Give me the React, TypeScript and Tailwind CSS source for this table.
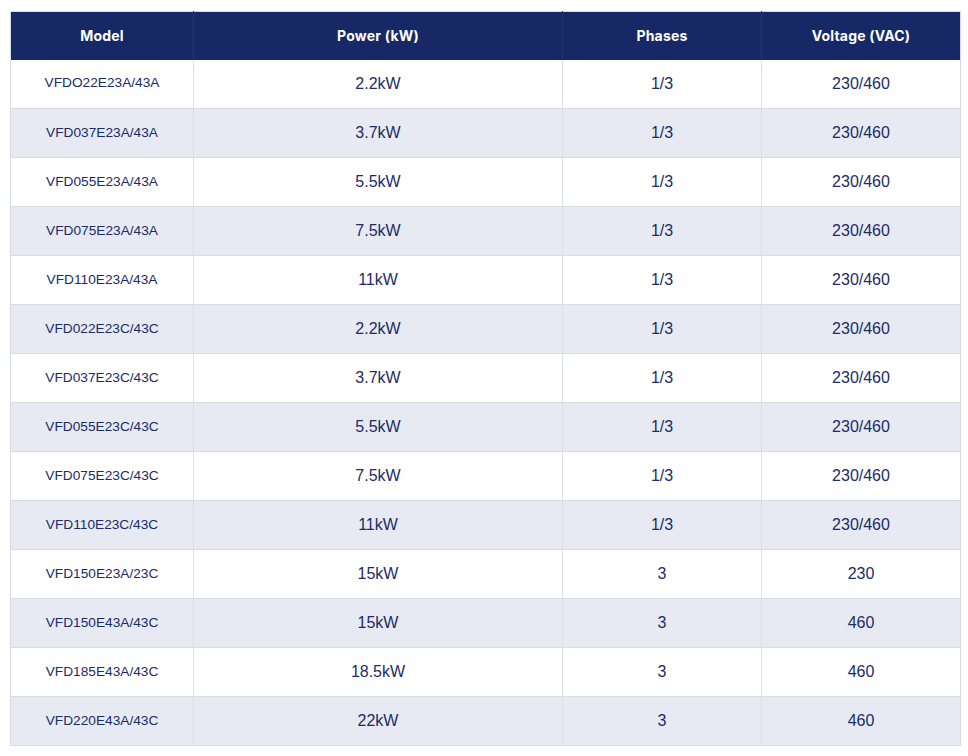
const rows: [string, string, string, string][] = [
  ['VFDO22E23A/43A', '2.2kW', '1/3', '230/460'],
  ['VFD037E23A/43A', '3.7kW', '1/3', '230/460'],
  ['VFD055E23A/43A', '5.5kW', '1/3', '230/460'],
  ['VFD075E23A/43A', '7.5kW', '1/3', '230/460'],
  ['VFD110E23A/43A', '11kW', '1/3', '230/460'],
  ['VFD022E23C/43C', '2.2kW', '1/3', '230/460'],
  ['VFD037E23C/43C', '3.7kW', '1/3', '230/460'],
  ['VFD055E23C/43C', '5.5kW', '1/3', '230/460'],
  ['VFD075E23C/43C', '7.5kW', '1/3', '230/460'],
  ['VFD110E23C/43C', '11kW', '1/3', '230/460'],
  ['VFD150E23A/23C', '15kW', '3', '230'],
  ['VFD150E43A/43C', '15kW', '3', '460'],
  ['VFD185E43A/43C', '18.5kW', '3', '460'],
  ['VFD220E43A/43C', '22kW', '3', '460'],
];

const headers = ['Model', 'Power (kW)', 'Phases', 'Voltage (VAC)'];

export default function App() {
  return (
    <div className="min-h-screen bg-white pl-[10px] pt-[11px]">
      <table className="w-[950px] table-fixed border-collapse border border-[#d8dbe2] font-['Liberation_Sans',Arial,sans-serif] text-[#1b2c66]">
        <colgroup>
          <col className="w-[183px]" />
          <col className="w-[369px]" />
          <col className="w-[199px]" />
          <col className="w-[199px]" />
        </colgroup>
        <thead>
          <tr className="h-[48px] bg-[#162865] shadow-[0_2px_4px_rgba(0,0,0,0.08)]">
            {headers.map((h) => (
              <th
                key={h}
                className="border-r border-[#22346f] text-center font-['Inter',sans-serif] text-[14px] font-bold tracking-[0.2px] text-white last:border-r-0"
              >
                {h}
              </th>
            ))}
          </tr>
        </thead>
        <tbody>
          {rows.map((r, i) => (
            <tr key={r[0]} className={`h-[49px] border-b border-[#d8dbe2] ${i % 2 === 1 ? 'bg-[#e7eaf2]' : 'bg-white'}`}>
              <td className="border-r border-[#dcdfe6] text-center text-[13.7px]">{r[0]}</td>
              <td className="border-r border-[#dcdfe6] text-center text-[16px]">{r[1]}</td>
              <td className="border-r border-[#dcdfe6] text-center text-[16px]">{r[2]}</td>
              <td className="text-center text-[16px]">{r[3]}</td>
            </tr>
          ))}
        </tbody>
      </table>
    </div>
  );
}
